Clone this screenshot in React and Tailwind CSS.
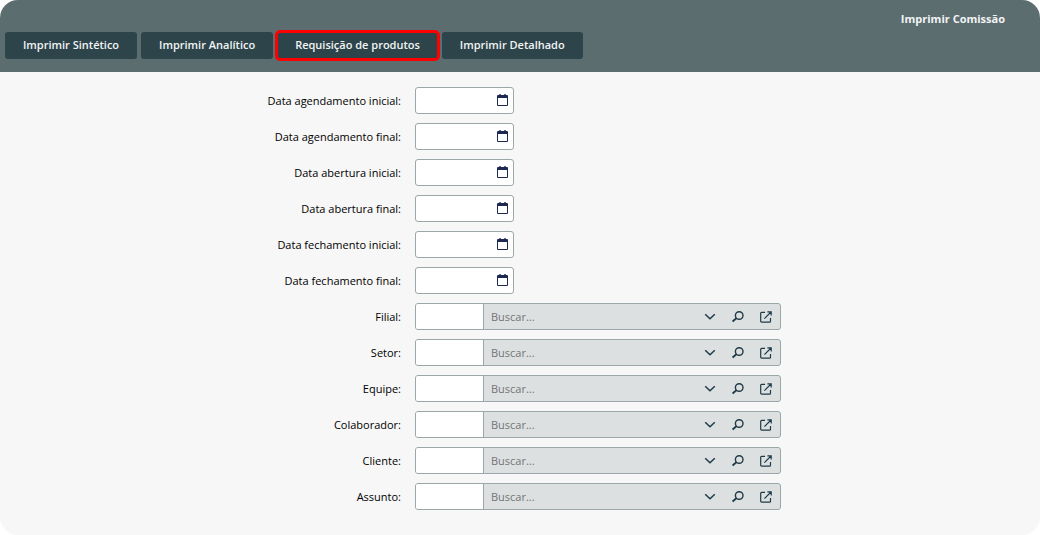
import { Fragment } from 'react';

const actions = [
    { label: 'Imprimir Sintético' },
    { label: 'Imprimir Analítico' },
    { label: 'Requisição de produtos', highlighted: true },
    { label: 'Imprimir Detalhado' },
];

const dateFields = [
    { id: 'agendamento-inicial', label: 'Data agendamento inicial:' },
    { id: 'agendamento-final', label: 'Data agendamento final:' },
    { id: 'abertura-inicial', label: 'Data abertura inicial:' },
    { id: 'abertura-final', label: 'Data abertura final:' },
    { id: 'fechamento-inicial', label: 'Data fechamento inicial:' },
    { id: 'fechamento-final', label: 'Data fechamento final:' },
];

const lookupFields = [
    { id: 'filial', label: 'Filial:' },
    { id: 'setor', label: 'Setor:' },
    { id: 'equipe', label: 'Equipe:' },
    { id: 'colaborador', label: 'Colaborador:' },
    { id: 'cliente', label: 'Cliente:' },
    { id: 'assunto', label: 'Assunto:' },
];

const CalendarIcon = () => (
    <svg width="11" height="13" viewBox="0 0 11 13" fill="#1d2951">
        <path d="M2 0h2v1H2zM7 0h2v1H7z" fillOpacity="0.7" />
        <path d="M1 1h9a1 1 0 0 1 1 1v9a1 1 0 0 1-1 1H1a1 1 0 0 1-1-1V2a1 1 0 0 1 1-1zM1 4v7h9V4z" fillRule="evenodd" />
    </svg>
);

const ChevronIcon = () => (
    <svg width="12" height="12" viewBox="0 0 12 12" fill="none" stroke="#1f3a47" strokeWidth="1.5">
        <path d="M1.2 3.2 6 7.8l4.8-4.6" />
    </svg>
);

const SearchIcon = () => (
    <svg width="12" height="12" viewBox="0 0 12 12" fill="none" stroke="#1f3a47" strokeWidth="1.4">
        <circle cx="7.2" cy="4.5" r="3.8" />
        <path d="M4.5 7.1.6 10.6" strokeWidth="1.9" />
    </svg>
);

const OpenIcon = () => (
    <svg width="12" height="12" viewBox="0 0 12 12" fill="none" stroke="#1f3a47" strokeWidth="1.2">
        <path d="M5 1.3H1.6a.9.9 0 0 0-.9.9v8a.9.9 0 0 0 .9.9h8a.9.9 0 0 0 .9-.9V7M7.4.8h3.8v3.8M11 1 4.4 7.6" />
    </svg>
);

const DateField = ({ id, label }) => (
    <div className="flex h-[27px] w-[99px] items-center rounded-[3px] border border-[#9ba7a9] bg-white">
        <input id={id} type="text" className="h-full min-w-0 flex-1 bg-transparent px-2 outline-none" />
        <button type="button" aria-label={`Abrir calendário - ${label}`} className="mr-[5px] flex">
            <CalendarIcon />
        </button>
    </div>
);

const LookupField = ({ id, label }) => (
    <div className="flex h-[27px] w-full max-w-[366px] overflow-hidden rounded-[3px] border border-[#9ba7a9] bg-[#dce0e1]">
        <input id={id} type="text" className="w-[68px] border-r border-[#9ba7a9] bg-white px-2 outline-none" />
        <input
            type="text"
            aria-label={`Buscar ${label}`}
            placeholder="Buscar..."
            className="min-w-0 flex-1 bg-transparent px-[7px] outline-none placeholder:text-[#757575]"
        />
        <div className="flex items-center gap-4 pr-2">
            <button type="button" aria-label={`Abrir lista - ${label}`}>
                <ChevronIcon />
            </button>
            <button type="button" aria-label={`Pesquisar - ${label}`}>
                <SearchIcon />
            </button>
            <button type="button" aria-label={`Abrir cadastro - ${label}`}>
                <OpenIcon />
            </button>
        </div>
    </div>
);

const App = () => {
    return (
        <main className="overflow-hidden rounded-[18px] bg-[#f7f7f7] font-['Open_Sans',sans-serif] text-[11px] leading-4 text-black">
            <header className="bg-[#5c6d70] pt-[11px] pb-[13px] text-[#f2f4f4]">
                <h1 className="mb-[5px] pr-[35px] text-right font-bold">Imprimir Comissão</h1>
                <div className="flex flex-wrap gap-1 px-[5px]">
                    {actions.map((action) => (
                        <button
                            key={action.label}
                            type="button"
                            className={`h-[27px] rounded-[3px] bg-[#2d444a] px-[18px] pb-px font-semibold ${
                                action.highlighted ? 'outline-3 -outline-offset-1 outline-[#ff0000]' : ''
                            }`}
                        >
                            {action.label}
                        </button>
                    ))}
                </div>
            </header>
            <form className="grid grid-cols-[401fr_625fr] items-center gap-x-[14px] gap-y-[9px] pt-[15px] pb-[25px]">
                {dateFields.map((field) => (
                    <Fragment key={field.id}>
                        <label htmlFor={field.id} className="text-right">{field.label}</label>
                        <DateField id={field.id} label={field.label} />
                    </Fragment>
                ))}
                {lookupFields.map((field) => (
                    <Fragment key={field.id}>
                        <label htmlFor={field.id} className="text-right">{field.label}</label>
                        <LookupField id={field.id} label={field.label} />
                    </Fragment>
                ))}
            </form>
        </main>
    );
};

export default App;
